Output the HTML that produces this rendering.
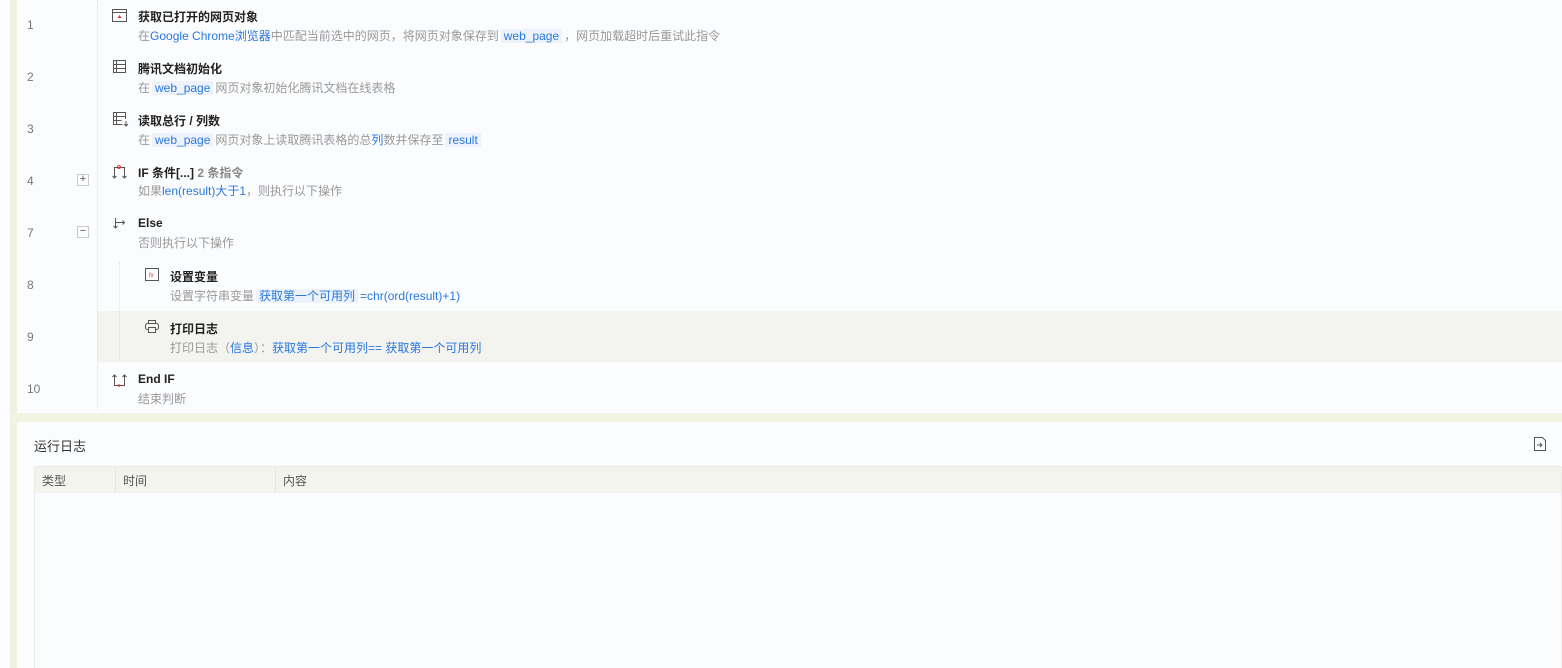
<!DOCTYPE html>
<html><head><meta charset="utf-8"><style>
*{margin:0;padding:0;box-sizing:border-box}
body{width:1562px;height:668px;overflow:hidden;background:#fbfcfe;font-family:"Liberation Sans","Noto Sans CJK SC",sans-serif;position:relative}
.strip{position:absolute;left:10px;top:0;width:7px;height:668px;background:#f1f1e2}
.sep{position:absolute;left:10px;top:413px;width:1552px;height:9px;background:#f3f3e4}
.vline{position:absolute;border-left:1px dotted #dcdde6}
.num{position:absolute;left:27px;font-size:12px;color:#777}
.t{position:absolute;font-size:12px;font-weight:bold;color:#222}
.d{position:absolute;font-size:12px;color:#999;white-space:nowrap}
.b{color:#2878e0}
.tag{color:#2878e0;background:#eef3fb;padding:0 3px;margin:0 2px}
.ic{position:absolute}
.pm{position:absolute;left:77px;width:12px;height:12px;border:1px solid #ccc;font-size:11px;line-height:9px;text-align:center;color:#555}
.hl{position:absolute;left:97px;top:311px;width:1465px;height:51px;background:#f3f3f0}
.panel{position:absolute;left:18px;top:422px;width:1544px;height:246px;background:#fbfcfe}
</style></head><body>
<div class="strip"></div>
<div class="hl"></div>
<div class="vline" style="left:97px;top:0;height:410px"></div>
<div class="vline" style="left:119px;top:262px;height:100px"></div>

<div class="num" style="top:18px">1</div>
<svg class="ic" style="left:112px;top:9px" width="16" height="14"><rect x="0.5" y="0.5" width="14" height="12" fill="none" stroke="#555"/><line x1="0.5" y1="3.5" x2="14.5" y2="3.5" stroke="#555"/><path d="M7.5 6l-2 3h4z" fill="#e33"/></svg>
<div class="t" style="left:138px;top:8px">获取已打开的网页对象</div>
<div class="d" style="left:138px;top:27px">在<span class="b">Google Chrome浏览器</span>中匹配当前选中的网页，将网页对象保存到<span class="tag">web_page</span>，网页加载超时后重试此指令</div>

<div class="num" style="top:70px">2</div>
<svg class="ic" style="left:113px;top:60px" width="14" height="14"><rect x="0.5" y="0.5" width="12" height="12" fill="none" stroke="#555"/><line x1="0.5" y1="4.5" x2="12.5" y2="4.5" stroke="#555"/><line x1="0.5" y1="8.5" x2="12.5" y2="8.5" stroke="#555"/><line x1="3.5" y1="0.5" x2="3.5" y2="12.5" stroke="#555"/></svg>
<div class="t" style="left:138px;top:60px">腾讯文档初始化</div>
<div class="d" style="left:138px;top:79px">在<span class="tag">web_page</span>网页对象初始化腾讯文档在线表格</div>

<div class="num" style="top:122px">3</div>
<svg class="ic" style="left:113px;top:112px" width="16" height="16"><path d="M12.5 7V0.5h-12v12h9M0.5 4.5h12M0.5 8.5h8M3.5 0.5v12M13 9v5M11 12l2 2 2-2" fill="none" stroke="#555"/></svg>
<div class="t" style="left:138px;top:112px">读取总行 / 列数</div>
<div class="d" style="left:138px;top:131px">在<span class="tag">web_page</span>网页对象上读取腾讯表格的总<span class="b">列</span>数并保存至<span class="tag">result</span></div>

<div class="num" style="top:174px">4</div>
<div class="pm" style="top:174px">+</div>
<svg class="ic" style="left:112px;top:164px" width="16" height="16"><path d="M2.5 14V3.5h10V14M0.5 12l2 2 2-2M10.5 12l2 2 2-2" fill="none" stroke="#555"/><circle cx="7" cy="3" r="1.5" fill="none" stroke="#e33"/></svg>
<div class="t" style="left:138px;top:164px">IF 条件[...] <span style="color:#888">2 条指令</span></div>
<div class="d" style="left:138px;top:182px">如果<span class="b">len(result)大于1</span>，则执行以下操作</div>

<div class="num" style="top:226px">7</div>
<div class="pm" style="top:226px">−</div>
<svg class="ic" style="left:113px;top:216px" width="16" height="16"><path d="M2.5 2v10M2.5 6.5h9M9.5 4.5l2 2-2 2M0.5 10l2 2 2-2" fill="none" stroke="#555"/></svg>
<div class="t" style="left:138px;top:216px">Else</div>
<div class="d" style="left:138px;top:234px">否则执行以下操作</div>

<div class="num" style="top:278px">8</div>
<svg class="ic" style="left:145px;top:268px" width="15" height="14"><rect x="0.5" y="0.5" width="13" height="12" fill="none" stroke="#555"/><text x="4" y="9" font-size="6" fill="#e33">fx</text></svg>
<div class="t" style="left:170px;top:268px">设置变量</div>
<div class="d" style="left:170px;top:287px">设置字符串变量<span class="tag">获取第一个可用列</span><span class="b">=chr(ord(result)+1)</span></div>

<div class="num" style="top:330px">9</div>
<svg class="ic" style="left:145px;top:320px" width="15" height="14"><rect x="3.5" y="0.5" width="7" height="3" fill="none" stroke="#555"/><rect x="0.5" y="3.5" width="13" height="6" rx="2" fill="none" stroke="#555"/><rect x="3.5" y="7.5" width="7" height="5" fill="#fff" stroke="#555"/></svg>
<div class="t" style="left:170px;top:320px">打印日志</div>
<div class="d" style="left:170px;top:339px">打印日志（<span class="b">信息</span>）：<span class="b">获取第一个可用列==</span> <span class="b">获取第一个可用列</span></div>

<div class="num" style="top:382px">10</div>
<svg class="ic" style="left:112px;top:372px" width="16" height="16"><path d="M2.5 14V3M0.5 5l2-2 2 2M12.5 14V3M10.5 5l2-2 2 2M2.5 13.5h10" fill="none" stroke="#555"/><circle cx="7" cy="13.5" r="1.3" fill="#e33"/></svg>
<div class="t" style="left:138px;top:372px">End IF</div>
<div class="d" style="left:138px;top:390px">结束判断</div>

<div class="sep"></div>
<div class="panel">
 <div style="position:absolute;left:16px;top:14px;font-size:13px;color:#333">运行日志</div>
 <svg style="position:absolute;left:1516px;top:15px" width="12" height="14"><path d="M0.5 0.5h8l3 3v10h-11z" fill="none" stroke="#555"/><path d="M3 8h5M6 6l2 2-2 2" fill="none" stroke="#555"/></svg>
 <div style="position:absolute;left:16px;top:44px;width:1528px;height:202px;border:1px solid #ebece6;border-bottom:none">
  <div style="height:26px;background:#f4f4ee;font-size:12px;color:#555;position:relative">
   <span style="position:absolute;left:7px;top:5px">类型</span>
   <span style="position:absolute;left:80px;top:0;height:26px;border-left:1px solid #e6e6dc"></span>
   <span style="position:absolute;left:88px;top:5px">时间</span>
   <span style="position:absolute;left:240px;top:0;height:26px;border-left:1px solid #e6e6dc"></span>
   <span style="position:absolute;left:248px;top:5px">内容</span>
  </div>
 </div>
</div>
</body></html>
